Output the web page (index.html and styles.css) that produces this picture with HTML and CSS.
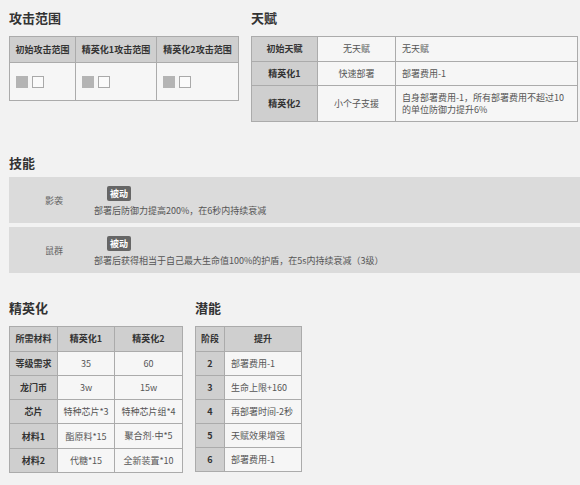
FILE: index.html
```html
<!DOCTYPE html>
<html lang="zh">
<head>
<meta charset="utf-8">
<link rel="stylesheet" href="styles.css">
</head>
<body>
<div class="top">
  <section class="sec">
    <h2 class="h">攻击范围</h2>
    <table class="tbl range">
      <colgroup><col class="w66"><col class="w81"><col class="w82"></colgroup>
      <tr class="hr"><th>初始攻击范围</th><th>精英化1攻击范围</th><th>精英化2攻击范围</th></tr>
      <tr class="br">
        <td><span class="grid"><i class="sq on"></i><i class="sq"></i></span></td>
        <td><span class="grid"><i class="sq on"></i><i class="sq"></i></span></td>
        <td><span class="grid"><i class="sq on"></i><i class="sq"></i></span></td>
      </tr>
    </table>
  </section>
  <section class="sec talent-sec">
    <h2 class="h">天赋</h2>
    <table class="tbl talent">
      <colgroup><col class="w66"><col class="w78"><col class="w182"></colgroup>
      <tr class="r25"><th>初始天赋</th><td>无天赋</td><td class="l">无天赋</td></tr>
      <tr class="r24"><th>精英化1</th><td>快速部署</td><td class="l">部署费用-1</td></tr>
      <tr class="r2l"><th>精英化2</th><td>小个子支援</td><td class="l">自身部署费用-1，所有部署费用不超过10的单位防御力提升6%</td></tr>
    </table>
  </section>
</div>

<section class="skills">
  <h2 class="h">技能</h2>
  <div class="skill">
    <div class="sname">影袭</div>
    <div class="sbody">
      <span class="badge">被动</span>
      <p class="desc">部署后防御力提高200%，在6秒内持续衰减</p>
    </div>
  </div>
  <div class="skill">
    <div class="sname">鼠群</div>
    <div class="sbody">
      <span class="badge">被动</span>
      <p class="desc">部署后获得相当于自己最大生命值100%的护盾，在5s内持续衰减（3级）</p>
    </div>
  </div>
</section>

<div class="bottom">
  <section class="sec">
    <h2 class="h">精英化</h2>
    <table class="tbl elite">
      <colgroup><col class="w48"><col class="w57"><col class="w68"></colgroup>
      <tr class="r25 hr"><th>所需材料</th><th>精英化1</th><th>精英化2</th></tr>
      <tr class="r24"><th>等级需求</th><td>35</td><td>60</td></tr>
      <tr class="r24"><th>龙门币</th><td>3w</td><td>15w</td></tr>
      <tr class="r24"><th>芯片</th><td>特种芯片*3</td><td>特种芯片组*4</td></tr>
      <tr class="r24"><th>材料1</th><td>酯原料*15</td><td>聚合剂<span class="dot">·</span>中*5</td></tr>
      <tr class="r24"><th>材料2</th><td>代糖*15</td><td>全新装置*10</td></tr>
    </table>
  </section>
  <section class="sec">
    <h2 class="h">潜能</h2>
    <table class="tbl pot">
      <colgroup><col class="w29"><col class="w77"></colgroup>
      <tr class="r25 hr"><th>阶段</th><th>提升</th></tr>
      <tr class="r24"><th>2</th><td class="l">部署费用-1</td></tr>
      <tr class="r24"><th>3</th><td class="l">生命上限+160</td></tr>
      <tr class="r24"><th>4</th><td class="l">再部署时间-2秒</td></tr>
      <tr class="r24"><th>5</th><td class="l">天赋效果增强</td></tr>
      <tr class="r24"><th>6</th><td class="l">部署费用-1</td></tr>
    </table>
  </section>
</div>
</body>
</html>
```

FILE: styles.css
```css
html, body {
  margin: 0;
  padding: 0;
}
body {
  background: #f2f2f2;
  padding: 10px 0 0 9px;
  font-family: "Noto Sans CJK SC", "Noto Sans", sans-serif;
  color: #555;
  font-size: 9px;
  overflow: hidden;
}
.h {
  margin: 0 0 10px;
  font-size: 13px;
  line-height: 16px;
  font-weight: bold;
  color: #333;
}
.top, .bottom {
  display: flex;
  gap: 12px;
  align-items: flex-start;
}
.talent-sec .tbl { margin-top: 1px; }

.tbl {
  border-collapse: collapse;
  table-layout: fixed;
  background: #f6f6f6;
}
.tbl th, .tbl td {
  border: 1px solid #ababab;
  padding: 0;
  text-align: center;
  white-space: nowrap;
  font-size: 9px;
}
.tbl th {
  background: #cfcfcf;
  color: #333;
  font-weight: bold;
}
.tbl td { color: #555; font-weight: normal; }
.tbl .hr th { background: #cfcfcf; }
.tbl td.l { text-align: left; padding-left: 6px; }
.dot { font-family: "Liberation Sans", sans-serif; }

.range { width: 230px; }
.talent { width: 327px; }
.elite { width: 174px; }
.pot { width: 107px; }

.w66 { width: 66px; }
.w81 { width: 81px; }
.w82 { width: 82px; }
.w78 { width: 78px; }
.w182 { width: 182px; }
.w48 { width: 48px; }
.w57 { width: 57px; }
.w68 { width: 68px; }
.w29 { width: 29px; }
.w77 { width: 77px; }

.range .hr th { line-height: 25px; }
.range .br td { height: 37px; text-align: left; padding-left: 6px; }
.grid { display: flex; gap: 4px; }
.sq {
  width: 12px;
  height: 12px;
  box-sizing: border-box;
  border: 1px solid #a9a9a9;
  background: #fafafa;
}
.sq.on { background: #b4b4b4; border-color: #b4b4b4; }

.r25 th, .r25 td { line-height: 24px; }
.r24 th, .r24 td { line-height: 23px; }
.r2l th, .r2l td { line-height: 12px; padding-top: 6px; padding-bottom: 5px; }
.r2l td.l { white-space: normal; padding-right: 6px; }

.skills { margin-top: 33px; }
.skills .h { margin-bottom: 6px; }
.skill {
  display: flex;
  align-items: center;
  background: #dbdbdb;
  height: 46px;
  margin-bottom: 4px;
}
.sname {
  width: 80px;
  padding-left: 5px;
  text-align: center;
  color: #666;
}
.sbody {
  display: flex;
  flex-direction: column;
  align-items: flex-start;
  padding-top: 3px;
}
.badge {
  margin-left: 13px;
  background: #666;
  color: #fff;
  border-radius: 2px;
  font-weight: bold;
  line-height: 15px;
  padding: 0 3px;
}
.desc {
  margin: 4px 0 0;
  line-height: 12px;
  color: #555;
}
.bottom { margin-top: 27px; }
.bottom .h { margin-bottom: 10px; }
```
